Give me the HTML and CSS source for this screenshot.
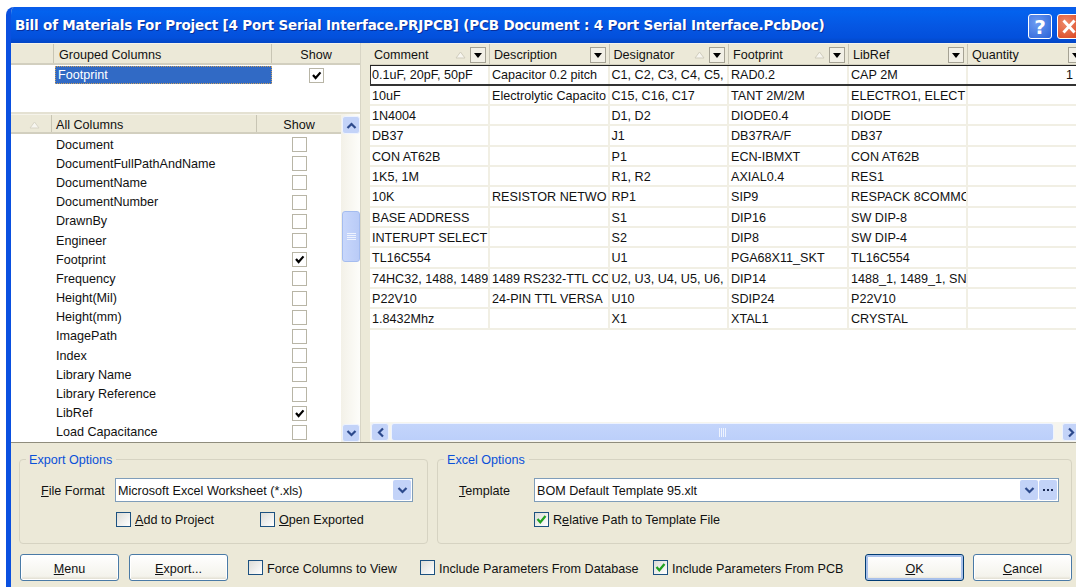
FILE: index.html
```html
<!DOCTYPE html>
<html lang="en">
<head>
<meta charset="utf-8">
<title>Bill of Materials</title>
<link rel="stylesheet" href="styles.css">
</head>
<body>
<div class="window">
  <div class="titlebar">
    <span class="title">Bill of Materials For Project [4 Port Serial Interface.PRJPCB] (PCB Document : 4 Port Serial Interface.PcbDoc)</span>
    <span class="cap-btn help">?</span>
    <span class="cap-btn close"><svg width="24" height="25" viewBox="0 0 24 25"><path d="M6 6l12 13M18 6L6 19" stroke="#fff" stroke-width="3.2" fill="none"/></svg></span>
  </div>

  <div class="workspace">
    <div class="left">
      <div class="head group-head">
        <span class="hc g-a"></span><span class="hc g-b">Grouped Columns</span><span class="hc g-c">Show</span>
      </div>
      <div class="grouped">
        <span class="sel">Footprint</span>
        <span class="cell-check"><span class="box on"><svg width="13" height="13" viewBox="0 0 13 13"><path d="M3 6l2.6 3L10.5 3.4" stroke="#000" stroke-width="2.2" fill="none"/></svg></span></span>
      </div>
      <div class="all">
        <div class="all-main">
          <div class="head all-head">
            <span class="hc a-a"><svg width="11" height="8" viewBox="0 0 11 8"><path d="M5.5 1L10 7H1z" fill="#f7f6f0" stroke="#d8d5c6"/></svg></span><span class="hc a-b">All Columns</span><span class="hc a-c">Show</span>
          </div>
          <div class="list">
            <div class="li"><span>Document</span><span class="box"></span></div>
            <div class="li"><span>DocumentFullPathAndName</span><span class="box"></span></div>
            <div class="li"><span>DocumentName</span><span class="box"></span></div>
            <div class="li"><span>DocumentNumber</span><span class="box"></span></div>
            <div class="li"><span>DrawnBy</span><span class="box"></span></div>
            <div class="li"><span>Engineer</span><span class="box"></span></div>
            <div class="li"><span>Footprint</span><span class="box on"><svg width="13" height="13" viewBox="0 0 13 13"><path d="M3 6l2.6 3L10.5 3.4" stroke="#000" stroke-width="2.2" fill="none"/></svg></span></div>
            <div class="li"><span>Frequency</span><span class="box"></span></div>
            <div class="li"><span>Height(Mil)</span><span class="box"></span></div>
            <div class="li"><span>Height(mm)</span><span class="box"></span></div>
            <div class="li"><span>ImagePath</span><span class="box"></span></div>
            <div class="li"><span>Index</span><span class="box"></span></div>
            <div class="li"><span>Library Name</span><span class="box"></span></div>
            <div class="li"><span>Library Reference</span><span class="box"></span></div>
            <div class="li"><span>LibRef</span><span class="box on"><svg width="13" height="13" viewBox="0 0 13 13"><path d="M3 6l2.6 3L10.5 3.4" stroke="#000" stroke-width="2.2" fill="none"/></svg></span></div>
            <div class="li"><span>Load Capacitance</span><span class="box"></span></div>
          </div>
        </div>
        <div class="vscroll">
          <span class="sb-btn"><svg width="11" height="9" viewBox="0 0 11 9"><path d="M1.5 7l4-4 4 4" stroke="#2d4a8c" stroke-width="2.2" fill="none"/></svg></span>
          <div class="v-track">
            <span class="v-thumb"><svg width="9" height="8" viewBox="0 0 9 8"><path d="M0 .5h9M0 2.5h9M0 4.5h9M0 6.5h9" stroke="#eef3fe" fill="none"/></svg></span>
          </div>
          <span class="sb-btn"><svg width="11" height="9" viewBox="0 0 11 9"><path d="M1.5 2l4 4 4-4" stroke="#2d4a8c" stroke-width="2.2" fill="none"/></svg></span>
        </div>
      </div>
    </div>

    <div class="splitter"></div>

    <div class="right">
      <div class="table-wrap">
        <div class="thead">
          <div class="th"><span class="th-label">Comment</span><svg class="sort" width="11" height="8" viewBox="0 0 11 8"><path d="M5.5 1L10 7H1z" fill="#f7f6f0" stroke="#d0cdbd"/></svg><span class="drop"></span></div>
          <div class="th"><span class="th-label">Description</span><span class="drop"></span></div>
          <div class="th"><span class="th-label">Designator</span><svg class="sort" width="11" height="8" viewBox="0 0 11 8"><path d="M5.5 1L10 7H1z" fill="#f7f6f0" stroke="#d0cdbd"/></svg><span class="drop"></span></div>
          <div class="th"><span class="th-label">Footprint</span><svg class="sort" width="11" height="8" viewBox="0 0 11 8"><path d="M5.5 1L10 7H1z" fill="#f7f6f0" stroke="#d0cdbd"/></svg><span class="drop"></span></div>
          <div class="th"><span class="th-label">LibRef</span><span class="drop"></span></div>
          <div class="th"><span class="th-label">Quantity</span><span class="drop"></span></div>
        </div>
        <div class="tr focus"><span>0.1uF, 20pF, 50pF</span><span>Capacitor 0.2 pitch</span><span>C1, C2, C3, C4, C5,</span><span>RAD0.2</span><span>CAP 2M</span><span class="num">1</span></div>
        <div class="tr"><span>10uF</span><span>Electrolytic Capacito</span><span>C15, C16, C17</span><span>TANT 2M/2M</span><span>ELECTRO1, ELECT</span><span></span></div>
        <div class="tr"><span>1N4004</span><span></span><span>D1, D2</span><span>DIODE0.4</span><span>DIODE</span><span></span></div>
        <div class="tr"><span>DB37</span><span></span><span>J1</span><span>DB37RA/F</span><span>DB37</span><span></span></div>
        <div class="tr"><span>CON AT62B</span><span></span><span>P1</span><span>ECN-IBMXT</span><span>CON AT62B</span><span></span></div>
        <div class="tr"><span>1K5, 1M</span><span></span><span>R1, R2</span><span>AXIAL0.4</span><span>RES1</span><span></span></div>
        <div class="tr"><span>10K</span><span>RESISTOR NETWO</span><span>RP1</span><span>SIP9</span><span>RESPACK 8COMMO</span><span></span></div>
        <div class="tr"><span>BASE ADDRESS</span><span></span><span>S1</span><span>DIP16</span><span>SW DIP-8</span><span></span></div>
        <div class="tr"><span>INTERUPT SELECT</span><span></span><span>S2</span><span>DIP8</span><span>SW DIP-4</span><span></span></div>
        <div class="tr"><span>TL16C554</span><span></span><span>U1</span><span>PGA68X11_SKT</span><span>TL16C554</span><span></span></div>
        <div class="tr"><span>74HC32, 1488, 1489</span><span>1489 RS232-TTL CO</span><span>U2, U3, U4, U5, U6,</span><span>DIP14</span><span>1488_1, 1489_1, SN</span><span></span></div>
        <div class="tr"><span>P22V10</span><span>24-PIN TTL VERSA</span><span>U10</span><span>SDIP24</span><span>P22V10</span><span></span></div>
        <div class="tr"><span>1.8432Mhz</span><span></span><span>X1</span><span>XTAL1</span><span>CRYSTAL</span><span></span></div>
      </div>
      <div class="hscroll">
        <span class="sb-btn h-btn"><svg width="9" height="11" viewBox="0 0 9 11"><path d="M7 1.5l-4 4 4 4" stroke="#2d4a8c" stroke-width="2.2" fill="none"/></svg></span>
        <span class="h-thumb"><svg width="8" height="9" viewBox="0 0 8 9"><path d="M.5 0v9M2.5 0v9M4.5 0v9M6.5 0v9" stroke="#eef3fe" fill="none"/></svg></span>
        <span class="sb-btn h-btn"><svg width="9" height="11" viewBox="0 0 9 11"><path d="M2 1.5l4 4-4 4" stroke="#2d4a8c" stroke-width="2.2" fill="none"/></svg></span>
      </div>
    </div>
  </div>

  <div class="options">
    <fieldset class="group export">
      <legend>Export Options</legend>
      <div class="field">
        <label class="field-label"><u>F</u>ile Format</label>
        <div class="combo"><span class="combo-text">Microsoft Excel Worksheet (*.xls)</span><span class="combo-btn"><svg width="11" height="9" viewBox="0 0 11 9"><path d="M1.5 2l4 4 4-4" stroke="#2d4a8c" stroke-width="2.2" fill="none"/></svg></span></div>
      </div>
      <div class="checks">
        <span class="chk"><span class="xpbox"></span><span class="chk-text"><u>A</u>dd to Project</span></span>
        <span class="chk"><span class="xpbox"></span><span class="chk-text"><u>O</u>pen Exported</span></span>
      </div>
    </fieldset>
    <fieldset class="group excel">
      <legend>Excel Options</legend>
      <div class="field">
        <label class="field-label"><u>T</u>emplate</label>
        <div class="combo"><span class="combo-text">BOM Default Template 95.xlt</span><span class="combo-btn"><svg width="11" height="9" viewBox="0 0 11 9"><path d="M1.5 2l4 4 4-4" stroke="#2d4a8c" stroke-width="2.2" fill="none"/></svg></span><span class="combo-btn"><svg width="12" height="4" viewBox="0 0 12 4"><path d="M1 1h2v2H1zM5 1h2v2H5zM9 1h2v2H9z" fill="#1b2a55"/></svg></span></div>
      </div>
      <div class="checks">
        <span class="chk"><span class="xpbox"><svg width="13" height="13" viewBox="0 0 13 13"><path d="M2.5 6l2.8 3.2L10.5 3" stroke="#21a121" stroke-width="2.3" fill="none"/></svg></span><span class="chk-text">R<u>e</u>lative Path to Template File</span></span>
      </div>
    </fieldset>
  </div>

  <div class="actions">
    <button class="btn"><u>M</u>enu</button>
    <button class="btn"><u>E</u>xport...</button>
    <span class="chk force"><span class="xpbox"></span><span class="chk-text">Force Columns to View</span></span>
    <span class="chk incl-db"><span class="xpbox"></span><span class="chk-text">Include Parameters From Database</span></span>
    <span class="chk incl-pcb"><span class="xpbox"><svg width="13" height="13" viewBox="0 0 13 13"><path d="M2.5 6l2.8 3.2L10.5 3" stroke="#21a121" stroke-width="2.3" fill="none"/></svg></span><span class="chk-text">Include Parameters From PCB</span></span>
    <button class="btn ok"><u>O</u>K</button>
    <button class="btn cancel"><u>C</u>ancel</button>
  </div>
</div>
</body>
</html>
```
FILE: styles.css
```css
* { box-sizing: border-box; }

html, body {
  margin: 0;
  height: 587px;
  background: #fff;
  overflow: hidden;
}

body {
  padding: 7px 0 0 6px;
  font: 12.6px/16px "Liberation Sans", Arial, sans-serif;
  color: #111;
}

.window {
  width: 1070px;
  height: 580px;
  background: #ece9d8;
  border-left: 5px solid #0a50e0;
  border-radius: 8px 0 0 0;
  overflow: hidden;
}

/* Caption */
.titlebar {
  height: 36px;
  margin-left: -5px;
  padding: 7px 0 0 9px;
  display: flex;
  align-items: flex-start;
  background: linear-gradient(#0a5ae8 0, #0362ee 12%, #0556e2 55%, #0350dc 85%, #0346c4 100%);
}

.title {
  width: 1013px;
  flex: none;
  font: bold 13.5px/22px "DejaVu Sans", sans-serif;
  letter-spacing: -.17px;
  color: #fff;
  white-space: nowrap;
  text-shadow: 1px 1px 0 #0a2f9a;
}

.cap-btn {
  flex: none;
  width: 24px;
  height: 25px;
  border: 1px solid #fff;
  border-radius: 3px;
  display: flex;
  align-items: center;
  justify-content: center;
}

.help {
  background: radial-gradient(circle at 35% 35%, #6d9cf2, #2a62d8);
  font: bold 20px/22px "DejaVu Sans", sans-serif;
  color: #fff;
}

.close {
  margin-left: 5px;
  background: radial-gradient(circle at 35% 35%, #ee8a6a, #d8401c);
}

/* Column chooser and data grid */
.workspace {
  height: 400px;
  display: flex;
  border-bottom: 1px solid #8f8c7d;
  background: #fff;
}

.left {
  width: 349px;
  flex: none;
  display: flex;
  flex-direction: column;
}

.head {
  height: 22px;
  display: flex;
  background: #ece9d8;
  border-top: 1px solid #f5f3ea;
  border-bottom: 2px solid #d2cfbf;
}

.hc {
  display: flex;
  align-items: center;
  border-right: 1px solid #c8c5b4;
  padding-top: 2px;
}

.all-head { height: 20px; }
.all-head .hc { padding-top: 3px; }

.g-a { width: 43px; }
.g-b { width: 218px; padding-left: 5px; }
.g-c { width: 88px; justify-content: center; border-right: 0; }
.a-a { width: 41px; justify-content: center; padding-left: 6px; }
.a-b { width: 205px; padding-left: 4px; }
.a-c { width: 84px; justify-content: center; border-right: 0; }

.grouped {
  height: 49px;
  display: flex;
  align-items: flex-start;
  padding: 1px 0 0 44px;
  border-bottom: 2px solid #e4e1d2;
}

.sel {
  width: 217px;
  height: 18px;
  padding-left: 3px;
  line-height: 18px;
  background: #316ac5;
  color: #fff;
  outline: 1px dotted #c8a060;
  outline-offset: -1px;
}

.cell-check {
  padding: 2px 0 0 37px;
}

.box {
  flex: none;
  width: 15px;
  height: 15px;
  background: #fff;
  border: 1px solid #b8b5a6;
  display: block;
}

.box svg { display: block; }

.all {
  flex: 1;
  min-height: 0;
  display: flex;
}

.all-main {
  width: 330px;
  flex: none;
  display: flex;
  flex-direction: column;
  overflow: hidden;
}

.list { padding-top: 1px; }

.li {
  height: 19.2px;
  display: flex;
  align-items: center;
  justify-content: space-between;
  padding: 0 34px 0 45px;
  white-space: nowrap;
}

/* Scrollbars */
.vscroll {
  width: 19px;
  flex: none;
  display: flex;
  flex-direction: column;
  padding-top: 1px;
  background: linear-gradient(90deg, #f3f1e8, #fdfdfa);
}

.sb-btn {
  flex: none;
  width: 18px;
  height: 18px;
  display: flex;
  align-items: center;
  justify-content: center;
  border: 1px solid #eef3fe;
  border-radius: 3px;
  background: #c3d3f8;
}

.vscroll .sb-btn { margin: 1px 0 0 1px; }

.v-track {
  flex: 1;
  padding-top: 77px;
  padding-left: 1px;
}

.v-thumb {
  width: 18px;
  height: 51px;
  display: flex;
  align-items: center;
  justify-content: center;
  background: linear-gradient(90deg, #c8d7fb, #b9cbf7);
  border: 1px solid #a4bcef;
  border-radius: 3px;
}

.splitter {
  width: 10px;
  flex: none;
  background: #ece9d8;
  border-left: 1px solid #d8d5c6;
}

.right {
  flex: 1;
  min-width: 0;
  display: flex;
  flex-direction: column;
}

.table-wrap {
  flex: 1;
  min-height: 0;
  overflow: hidden;
}

.thead, .tr {
  display: grid;
  grid-template-columns: 120px 119.5px 119.5px 120px 119px 120px;
  width: 718px;
}

.thead {
  height: 22px;
  background: #ece9d8;
  border-top: 1px solid #f5f3ea;
  border-bottom: 1px solid #d2cfbf;
}

.th {
  display: flex;
  align-items: center;
  padding: 1px 3px 0 4px;
  border-right: 1px solid #c8c5b4;
  white-space: nowrap;
  min-width: 0;
}

.th-label { flex: 1; }

.sort { margin-right: 4px; }

.drop {
  flex: none;
  width: 16px;
  height: 16px;
  border: 1px solid #a5a294;
  background: #f2f0e6;
  position: relative;
}

.drop::after {
  content: "";
  position: absolute;
  left: 3px;
  top: 5px;
  border: 4px solid transparent;
  border-top: 5px solid #000;
  border-bottom: 0;
}

.tr {
  height: 20.33px;
  border-bottom: 2px solid #f1efe4;
  line-height: 20px;
}

.tr > span {
  padding-left: 2px;
  border-right: 2px solid #f1efe4;
  overflow: hidden;
  white-space: nowrap;
}

.tr .num {
  padding-right: 13px;
  text-align: right;
}

.tr.focus {
  border-top: 1px solid #222;
  border-bottom: 2px solid #333;
  box-shadow: inset 1px 0 0 #333;
  height: 20.6px;
  line-height: 18px;
}

.hscroll {
  height: 20px;
  flex: none;
  display: flex;
  align-items: center;
  gap: 2px;
  padding-left: 1px;
  background: #f6f5ee;
}

.h-btn { width: 18px; }

.h-thumb {
  width: 663px;
  height: 18px;
  flex: none;
  display: flex;
  align-items: center;
  justify-content: center;
  background: linear-gradient(#c4d5fb, #bccffa);
  border: 1px solid #eef3fe;
  border-radius: 3px;
  margin-right: 6px;
}

/* Option groups */
.options {
  display: flex;
  gap: 9px;
  padding: 8px 0 0 8px;
}

.group {
  margin: 0;
  height: 93px;
  padding: 11px 0 0;
  border: 1px solid #d6d3c2;
  border-radius: 4px;
}

.group legend {
  margin-left: 6px;
  padding: 2px 4px 0 3px;
  color: #0a50d8;
  line-height: 14px;
}

.export { width: 409px; }
.excel { width: 635px; }

.field {
  display: flex;
  align-items: center;
  height: 24px;
}

.field-label { flex: none; padding-top: 1px; }
.export .field-label { padding-left: 21px; width: 95px; }
.excel .field-label { width: 96px; padding-left: 21px; }

.combo {
  display: flex;
  align-items: center;
  background: #fff;
  border: 1px solid #7f9db9;
  height: 24px;
  padding-right: 1px;
  gap: 1px;
}

.export .combo { width: 298px; }
.excel .combo { width: 525px; }

.combo-text {
  flex: 1;
  padding: 1px 0 0 2px;
  white-space: nowrap;
}

.combo-btn {
  flex: none;
  width: 18px;
  height: 20px;
  display: flex;
  align-items: center;
  justify-content: center;
  background: #c3d3f8;
  border-radius: 2px;
}

.checks {
  display: flex;
  padding: 9px 0 0 96px;
}

.export .chk:first-child { width: 144px; }

.chk {
  display: inline-flex;
  align-items: center;
  gap: 4px;
  white-space: nowrap;
}

.chk-text { padding-top: 1px; }

.xpbox {
  flex: none;
  width: 15px;
  height: 15px;
  background: linear-gradient(135deg, #dcdcd7, #fff);
  border: 1px solid #1c5180;
}

.xpbox svg { display: block; }

/* Bottom button row */
.actions {
  display: flex;
  align-items: center;
  padding: 10px 0 0 9px;
  height: 37px;
}

.actions .chk-text { padding-top: 2px; }

.btn {
  flex: none;
  width: 99px;
  height: 27px;
  padding: 2px 0 0;
  margin-right: 10px;
  font: inherit;
  color: #111;
  background: linear-gradient(#fff, #f4f3ec 85%, #dcd8c8);
  border: 1px solid #4a7aa6;
  border-radius: 3px;
  box-shadow: inset 0 0 0 1px #fff;
}

.force { margin-left: 10px; width: 172px; }
.incl-db { width: 233px; }
.incl-pcb { width: 212px; }

.ok {
  margin-right: 9px;
  border-color: #003c74;
  box-shadow: inset 0 0 0 2px #a8c0ea;
}

.cancel { margin-right: 0; }
```
